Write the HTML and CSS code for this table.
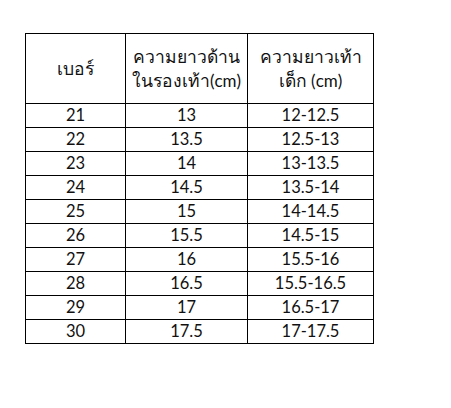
FILE: index.html
```html
<!DOCTYPE html>
<html lang="th">
<head>
<meta charset="utf-8">
<link rel="stylesheet" href="styles.css">
</head>
<body>
<table class="size-table">
  <colgroup>
    <col class="c1"><col class="c2"><col class="c3">
  </colgroup>
  <thead>
    <tr class="head">
      <th><span class="th">เบอร์</span></th>
      <th><span class="th">ความยาวด้าน</span><br><span class="th">ในรองเท้า</span>(cm)</th>
      <th><span class="th">ความยาวเท้า</span><br><span class="th">เด็ก</span> (cm)</th>
    </tr>
  </thead>
  <tbody>
    <tr><td>21</td><td>13</td><td>12-12.5</td></tr>
    <tr><td>22</td><td>13.5</td><td>12.5-13</td></tr>
    <tr><td>23</td><td>14</td><td>13-13.5</td></tr>
    <tr><td>24</td><td>14.5</td><td>13.5-14</td></tr>
    <tr><td>25</td><td>15</td><td>14-14.5</td></tr>
    <tr><td>26</td><td>15.5</td><td>14.5-15</td></tr>
    <tr><td>27</td><td>16</td><td>15.5-16</td></tr>
    <tr><td>28</td><td>16.5</td><td>15.5-16.5</td></tr>
    <tr><td>29</td><td>17</td><td>16.5-17</td></tr>
    <tr><td>30</td><td>17.5</td><td>17-17.5</td></tr>
  </tbody>
</table>
</body>
</html>
```
FILE: styles.css
```css
html, body {
  margin: 0;
  padding: 0;
  background: #ffffff;
}
body {
  padding: 33px 0 0 25px;
  font-family: "Lato", "Open Sans", "DejaVu Sans", sans-serif;
  color: #111;
}
.size-table {
  border-collapse: collapse;
  table-layout: fixed;
  width: 348px;
}
.c1 { width: 100px; }
.c2 { width: 122px; }
.c3 { width: 126px; }
.size-table th,
.size-table td {
  border: 1px solid #000;
  padding: 0;
  text-align: center;
  vertical-align: middle;
  font-size: 16.5px;
  font-weight: normal;
  line-height: 23px;
}
.size-table th {
  font-size: 17px;
  line-height: 24px;
  white-space: nowrap;
}
.th {
  font-size: 17.5px;
  font-weight: 500;
}
.head {
  height: 70px;
}
.size-table tbody tr {
  height: 23.4px;
}
```
